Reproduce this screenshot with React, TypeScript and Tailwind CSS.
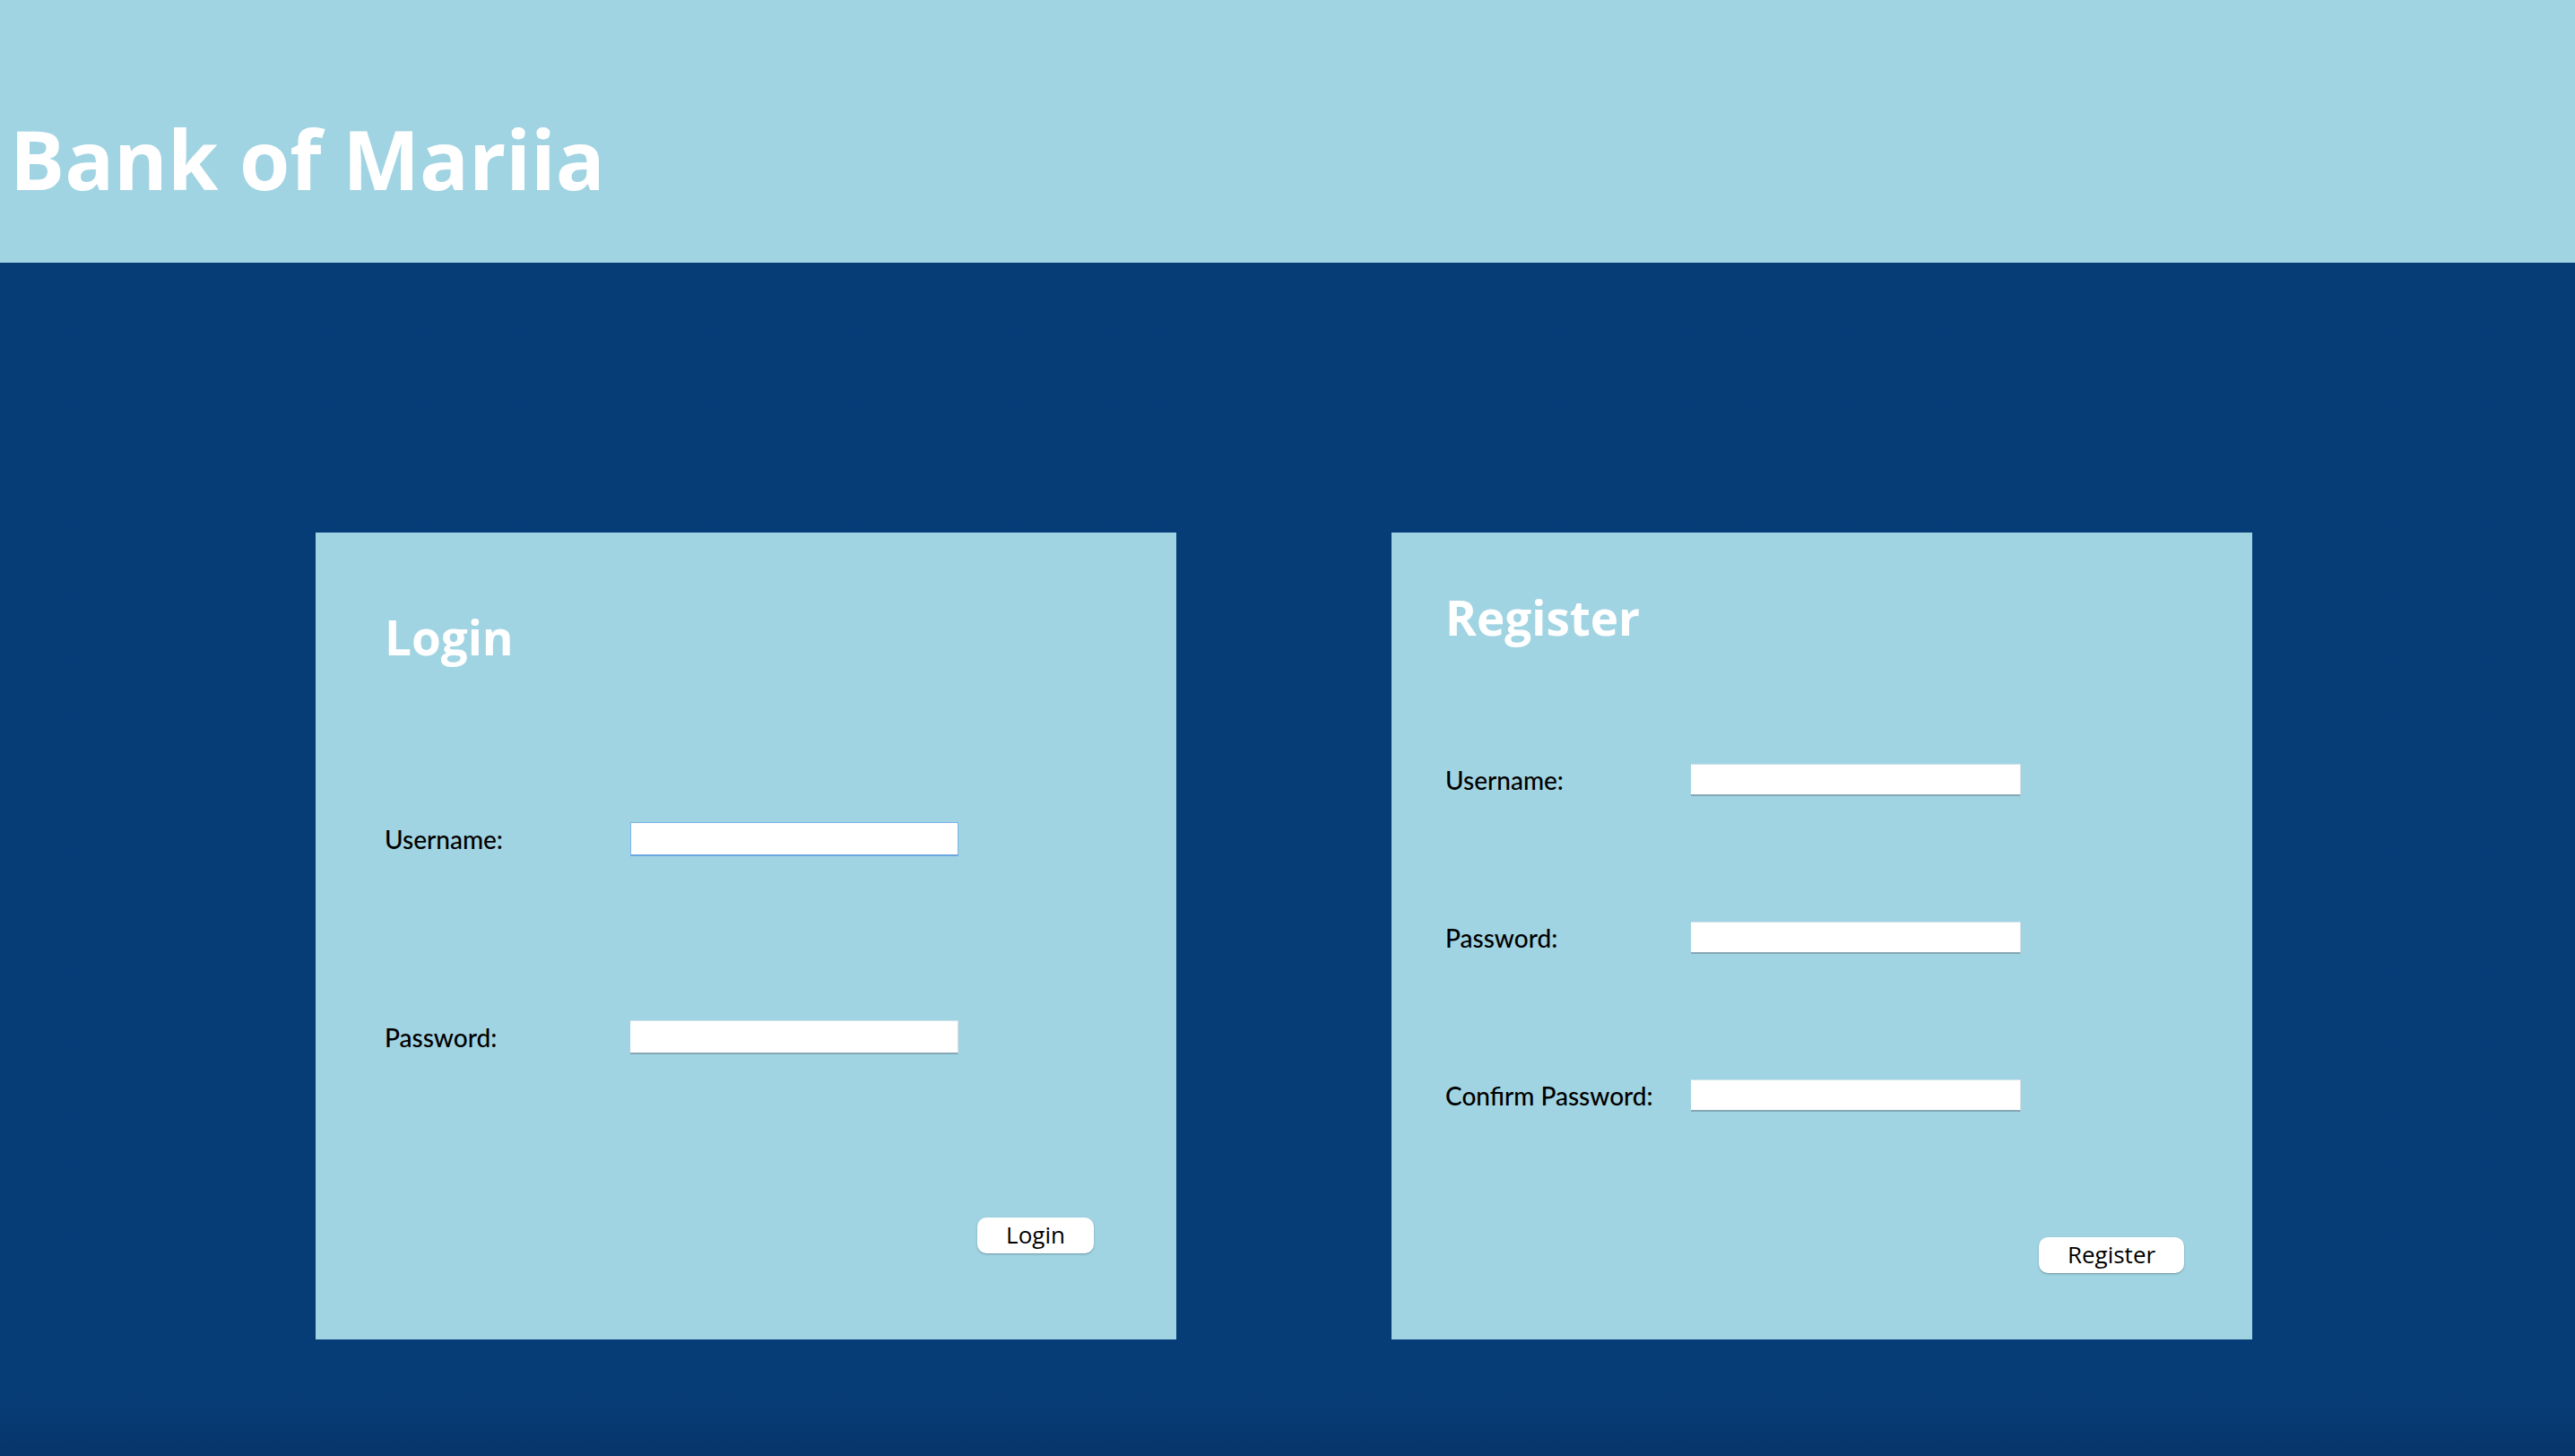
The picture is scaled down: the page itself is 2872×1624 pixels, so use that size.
import React from 'react';

// Bank of Mariia — login / register landing screen

const labelFont = { fontFamily: 'Lato, "Liberation Sans", sans-serif' };
const headFont = { fontFamily: '"Open Sans", "Liberation Sans", sans-serif' };

function Field({ label, inputWidth, height, focused }: {
  label: string;
  inputWidth: string;
  height: string;
  focused?: boolean;
}) {
  return (
    <div className="flex items-center">
      <span className="w-[274px] text-[28px] leading-none text-black font-medium" style={labelFont}>
        {label}
      </span>
      <input
        className={
          focused
            ? `${inputWidth} ${height} bg-white border border-[#7db3e8] border-b-2 border-b-[#6aa6e2] outline-none`
            : `${inputWidth} ${height} bg-white border-t border-t-[#cfe3ea] border-b-2 border-b-[#84a7b6] border-r border-r-[#d6dde0] outline-none`
        }
      />
    </div>
  );
}

function PanelButton({ children, width }: { children: React.ReactNode; width: string }) {
  return (
    <button
      className={`${width} h-[40px] pb-[2px] bg-white rounded-[10px] shadow-[0_1px_2px_rgba(40,70,90,0.45)] text-[26px] leading-none text-black`}
      style={headFont}
    >
      {children}
    </button>
  );
}

function LoginPanel() {
  return (
    <div className="w-[960px] h-[900px] bg-[#a1d4e2] pl-[77px] pt-[90px] flex flex-col">
      <h2 className="text-[53px] leading-none font-bold text-white" style={headFont}>Login</h2>
      <div className="mt-[180px] flex flex-col gap-[183px]">
        <Field label="Username:" inputWidth="w-[366px]" height="h-[38px]" focused />
        <Field label="Password:" inputWidth="w-[366px]" height="h-[38px]" />
      </div>
      <div className="mt-[182px] flex justify-end pr-[92px]">
        <PanelButton width="w-[130px]">Login</PanelButton>
      </div>
    </div>
  );
}

function RegisterPanel() {
  return (
    <div className="w-[960px] h-[900px] bg-[#a1d4e2] pl-[60px] pt-[68px] flex flex-col">
      <h2 className="text-[53px] leading-none font-bold text-white" style={headFont}>Register</h2>
      <div className="mt-[137px] flex flex-col gap-[140px]">
        <Field label="Username:" inputWidth="w-[368px]" height="h-[36px]" />
        <Field label="Password:" inputWidth="w-[368px]" height="h-[36px]" />
        <Field label="Confirm Password:" inputWidth="w-[368px]" height="h-[36px]" />
      </div>
      <div className="mt-[140px] flex justify-end pr-[76px]">
        <PanelButton width="w-[162px]">Register</PanelButton>
      </div>
    </div>
  );
}

export default function App() {
  return (
    <div className="w-[2872px] h-[1624px] flex flex-col overflow-hidden">
      <header className="h-[293px] shrink-0 bg-[#a1d4e2] pt-[132px] pl-[11px]">
        <h1 className="text-[91px] leading-none font-bold text-white" style={headFont}>
          Bank of Mariia
        </h1>
      </header>
      <main className="flex-1 flex gap-[240px] pl-[352px] pt-[301px] bg-linear-to-b from-[#073d77] via-[#073d77] via-95% to-[#06356a]">
        <LoginPanel />
        <RegisterPanel />
      </main>
    </div>
  );
}
